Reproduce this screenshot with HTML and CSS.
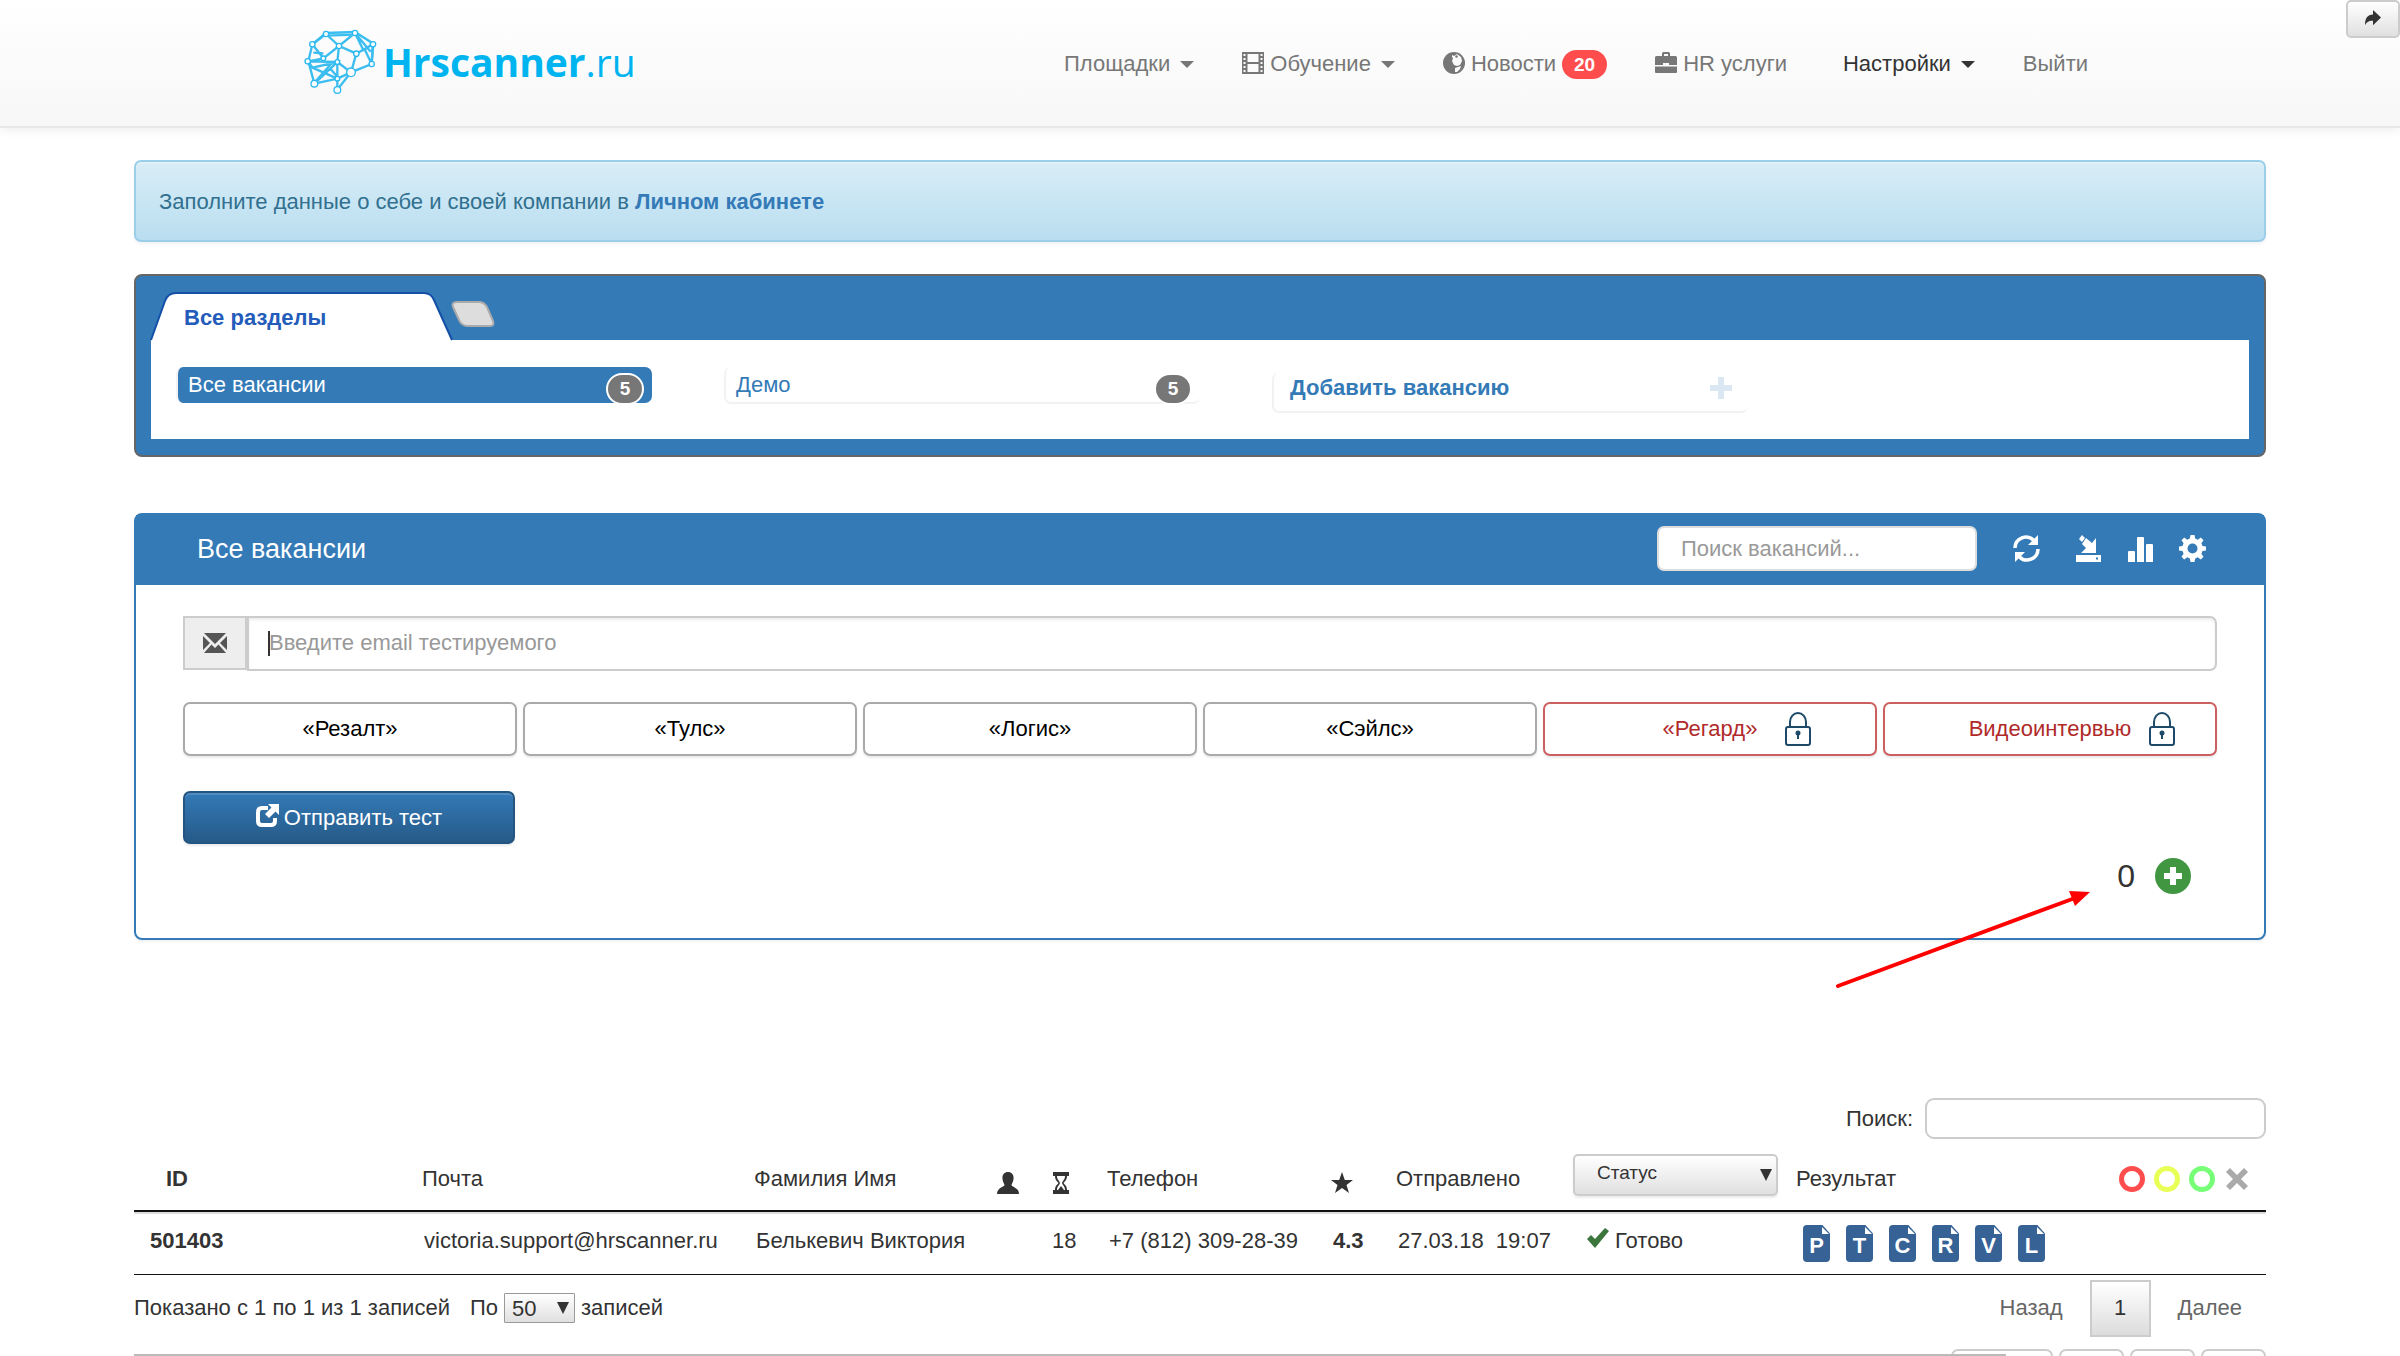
FILE: index.html
```html
<!DOCTYPE html>
<html lang="ru">
<head>
<meta charset="utf-8">
<title>Hrscanner.ru</title>
<link rel="stylesheet" href="styles.css">
</head>
<body>
<header class="navbar">
  <div class="navbar-inner">
    <a class="logo" href="#">
      <svg class="logo-mark" viewBox="69 87 222 198" aria-hidden="true">
        <g fill="none" stroke="#3cbdf0" stroke-width="7">
          <path d="M138 99L225 96L280 131L275 192L213 217L172 269L172 236L103 251L85 184L97 133Z"/>
          <path d="M138 107L225 104M138 102L177 138L225 99L272 155M225 99L250 150L278 133L229 161L177 138L172 186M130 175L97 133L138 102M177 138L130 175L85 184L172 186L213 217L229 161M278 133L275 192M172 186L172 236L213 217M85 184L97 203L172 186L103 251M97 203L172 236M130 160L100 158M172 186L213 217M105 246L155 190M150 205L172 230M254 148L275 192"/>
        </g>
        <g fill="#fff" stroke="#2bb8f0" stroke-width="4">
          <circle cx="138" cy="102" r="8"/><circle cx="225" cy="99" r="8"/><circle cx="97" cy="133" r="8"/><circle cx="177" cy="138" r="8"/><circle cx="279" cy="133" r="8"/><circle cx="229" cy="161" r="8"/><circle cx="83" cy="184" r="8"/><circle cx="130" cy="175" r="7"/><circle cx="172" cy="186" r="7"/><circle cx="275" cy="192" r="8"/><circle cx="213" cy="217" r="13"/><circle cx="103" cy="251" r="10"/><circle cx="172" cy="236" r="7"/><circle cx="172" cy="270" r="10"/>
        </g>
      </svg>
      <span class="logo-text"><b>Hrscanner</b>.ru</span>
    </a>
    <nav class="nav">
      <a href="#">Площадки <i class="caret"></i></a>
      <a href="#"><svg class="ic" viewBox="0 0 22 22"><path fill-rule="evenodd" d="M0 0h22v22H0zM1.500 2v2h2V2zM1.500 6v2h2V6zM1.500 10v2h2v-2zM1.500 14v2h2v-2zM1.500 18v2h2v-2zM18.500 2v2h2V2zM18.500 6v2h2V6zM18.500 10v2h2v-2zM18.500 14v2h2v-2zM18.500 18v2h2v-2zM5.500 2v8h11V2zM5.500 12v8h11v-8z"/></svg> Обучение <i class="caret"></i></a>
      <a href="#"><svg class="ic" viewBox="0 0 22 22"><circle cx="11" cy="11" r="11"/><path fill="#fbfbfb" d="M9 3l2 1 3-2 4 3 1 4-2 4-3 1-3-1-2-4 1-3-1-1zM12 16l6-2-1 3-3 3-2 0z"/><path d="M13 3l2 1-1 2-2-1z"/></svg> Новости <span class="tag">20</span></a>
      <a class="wide" href="#"><svg class="ic" viewBox="0 0 22 22"><path fill-rule="evenodd" d="M7 4V1.500Q7 0 8.500 0h5Q15 0 15 1.500V4h5.500Q22 4 22 5.500V13h-8v-2H8v2H0V5.500Q0 4 1.500 4zM9 2v2h4V2zM0 14.500h22V20q0 1-1 1H1q-1 0-1-1z"/></svg> HR услуги</a>
      <a class="active" href="#">Настройки <i class="caret"></i></a>
      <a href="#">Выйти</a>
    </nav>
  </div>
  <button class="share" aria-label="Поделиться"><svg viewBox="0 0 20 20"><path fill="#333" d="M10 0l10 9.500L10 19v-5.500C5 13 2 15 0 19 0 10 3 6 10 5.500z"/></svg></button>
</header>

<main class="page">
  <div class="alert">Заполните данные о себе и своей компании в <a href="#">Личном кабинете</a></div>

  <section class="sections">
    <div class="tabs">
      <button class="tab">
        <svg class="tab-shape" viewBox="0 0 302 48" aria-hidden="true"><path fill="#fff" d="M0 48L14 9Q17 1 25 1H273Q280 1 283 8L301 48Z"/><path fill="none" stroke="#1450a8" stroke-width="2" d="M0 48L14 9Q17 1 25 1H273Q280 1 283 8L301 48"/></svg>
        <span>Все разделы</span>
      </button>
      <button class="tab-new" aria-label="Новый раздел"><svg viewBox="0 0 44 26"><path fill="#ddd" stroke="#aaa" stroke-width="2" d="M6 1H28Q33 1 36 6L42 20Q44 25 39 25H17Q12 25 9 21L2 6Q0 1 6 1Z"/></svg></button>
    </div>
    <div class="vacancies">
      <a class="vacancy current" href="#">Все вакансии <span class="count">5</span></a>
      <a class="vacancy" href="#">Демо <span class="count">5</span></a>
      <a class="vacancy add" href="#">Добавить вакансию <svg viewBox="0 0 22 22"><path fill="#dbe7f2" d="M8 0h6v8h8v6h-8v8H8v-8H0V8h8z"/></svg></a>
    </div>
  </section>

  <section class="panel">
    <div class="panel-head">
      <h1>Все вакансии</h1>
      <input class="find" type="text" placeholder="Поиск вакансий..." aria-label="Поиск вакансий">
      <div class="tools">
        <button aria-label="Обновить" class="first"><svg viewBox="0 0 27 27"><path fill="none" stroke="#fff" stroke-width="3.500" d="M2 13A11 11 0 0 1 21 5.500M25 14A11 11 0 0 1 6 21.500"/><path fill="#fff" d="M25 0v10h-10zM2 27V17h10z"/></svg></button>
        <button aria-label="Загрузить"><svg viewBox="0 0 27 27"><path fill="#fff" fill-rule="evenodd" d="M1 20h25v7H1zM21 22.500v2h2v-2zM4 4l3-4 3 3-3 4zM11 3l6 5 4-5v15H6l5-5-4-4z"/></svg></button>
        <button aria-label="Статистика"><svg viewBox="0 0 27 27"><path fill="#fff" d="M1 17q0-1 1-1h5q1 0 1 1v10H1zM10 3q0-1 1-1h5q1 0 1 1v24h-7zM19 10q0-1 1-1h5q1 0 1 1v17h-7z"/></svg></button>
        <button aria-label="Настройки"><svg viewBox="0 0 27 27"><path fill="#fff" fill-rule="evenodd" d="M11.500 0h4l.7 3.600 2.600 1.100 3-2.100 2.700 2.700-2.100 3 1.100 2.600 3.500.6v4l-3.500.6-1.100 2.600 2.100 3-2.700 2.700-3-2.100-2.600 1.100-.7 3.600h-4l-.7-3.600-2.600-1.100-3 2.100-2.700-2.700 2.100-3-1.100-2.600-3.500-.6v-4l3.500-.6 1.100-2.600-2.100-3 2.700-2.700 3 2.100 2.600-1.100zM13.500 8.500a5 5 0 1 0 0 10 5 5 0 0 0 0-10z"/></svg></button>
      </div>
    </div>
    <div class="panel-body">
      <div class="email">
        <label class="addon" for="email" aria-label="Email"><svg viewBox="0 0 24 20"><path fill="#555" d="M1 0h22L12 11zM0 3l7 7-7 7zM24 3l-7 7 7 7zM8.500 11.500L12 15l3.500-3.500L23 20H1z"/></svg></label>
        <div class="email-box"><i class="cursor"></i><input id="email" type="email" placeholder="Введите email тестируемого"></div>
      </div>
      <div class="tests">
        <button>«Резалт»</button>
        <button>«Тулс»</button>
        <button>«Логис»</button>
        <button>«Сэйлс»</button>
        <button class="locked gap">«Регард» <svg viewBox="0 0 26 34"><path fill="none" stroke="#1c4a68" stroke-width="2" d="M5 15V10a8 9 0 0 1 16 0v5M3 15h20q2 0 2 2v14q0 2-2 2H3q-2 0-2-2V17q0-2 2-2z"/><circle cx="13" cy="21" r="2.500" fill="#1c4a68"/><path stroke="#1c4a68" stroke-width="2" d="M13 21v6"/></svg></button>
        <button class="locked video">Видеоинтервью <svg viewBox="0 0 26 34"><path fill="none" stroke="#1c4a68" stroke-width="2" d="M5 15V10a8 9 0 0 1 16 0v5M3 15h20q2 0 2 2v14q0 2-2 2H3q-2 0-2-2V17q0-2 2-2z"/><circle cx="13" cy="21" r="2.500" fill="#1c4a68"/><path stroke="#1c4a68" stroke-width="2" d="M13 21v6"/></svg></button>
      </div>
      <button class="send"><svg viewBox="0 0 23 23"><path fill="none" stroke="#fff" stroke-width="4" d="M12 4H6Q2 4 2 8v9q0 4 4 4h9q4 0 4-4v-3"/><path fill="#fff" d="M12 0h11v11l-3.500-3.500L13 14l-4-4 6.500-6.500z"/></svg> Отправить тест</button>
      <div class="balance"><span>0</span><button aria-label="Пополнить"><svg viewBox="0 0 36 36"><circle cx="18" cy="18" r="18" fill="#419641"/><path fill="#fff" d="M15 9h6v6h6v6h-6v6h-6v-6H9v-6h6z"/></svg></button></div>
    </div>
    <svg class="pointer" viewBox="0 0 256 100" aria-hidden="true"><path stroke="#f00" stroke-width="4" stroke-linecap="round" d="M3 97L240 9"/><path fill="#f00" d="M255 3L234 2L240 17Z"/></svg>
  </section>

  <div class="search"><label for="search">Поиск:</label><input id="search" type="text"></div>

  <table class="results">
    <colgroup><col class="c-id"><col class="c-mail"><col class="c-name"><col class="c-user"><col class="c-time"><col class="c-phone"><col class="c-star"><col class="c-date"><col class="c-status"><col></colgroup>
    <thead>
      <tr>
        <th class="id">ID</th>
        <th>Почта</th>
        <th>Фамилия Имя</th>
        <th class="sym" aria-label="Пользователь"><svg viewBox="0 0 22 22"><path fill="#333" d="M11 0c4 0 6 3 5.500 7-.3 3-1.500 4-2 6 0 2 7.500 2.500 7.500 9H0c0-6.500 7.500-7 7.500-9-.5-2-1.700-3-2-6C5 3 7 0 11 0z"/></svg></th>
        <th class="sym" aria-label="Время"><svg viewBox="0 0 22 22"><path fill="#333" fill-rule="evenodd" d="M3 0h16v4h-2c0 4-2 5-3.500 7 1.500 2 3.500 3 3.500 7h2v4H3v-4h2c0-4 2-5 3.500-7C7 9 5 8 5 4H3zM7 4c0 4 2.500 4.500 3 7-.5 2.500-3 3-3 7h1l3-4 3 4h1c0-4-2.500-4.500-3-7 .5-2.500 3-3 3-7z"/></svg></th>
        <th>Телефон</th>
        <th class="sym" aria-label="Оценка"><svg viewBox="0 0 22 22"><path fill="#333" d="M11 0l2.800 8H22l-6.500 5 2.500 8-7-5-7 5 2.500-8L0 8h8.200z"/></svg></th>
        <th>Отправлено</th>
        <th class="status"><span class="pick"><select aria-label="Статус"><option>Статус</option></select></span></th>
        <th class="result"><div class="result-head">Результат<span class="marks"><i class="ring red"></i><i class="ring yellow"></i><i class="ring green"></i><svg viewBox="0 0 24 24"><path fill="#aaa" d="M5 1l7 7 7-7 4 4-7 7 7 7-4 4-7-7-7 7-4-4 7-7-7-7z"/></svg></span></div></th>
      </tr>
    </thead>
    <tbody>
      <tr>
        <td><b>501403</b></td>
        <td>victoria.support@hrscanner.ru</td>
        <td>Белькевич Виктория</td>
        <td></td>
        <td>18</td>
        <td>+7 (812) 309-28-39</td>
        <td><b>4.3</b></td>
        <td>27.03.18&nbsp; 19:07</td>
        <td><svg class="ok" viewBox="0 0 22 20"><path fill="#3c763d" d="M0 11l4-4 4 4L18 0l4 3L8 20z"/></svg> Готово</td>
        <td>
          <div class="files">
            <a href="#">P</a><a href="#">T</a><a href="#">C</a><a href="#">R</a><a href="#">V</a><a href="#">L</a>
          </div>
        </td>
      </tr>
    </tbody>
  </table>

  <div class="table-foot">
    <span>Показано с 1 по 1 из 1 записей</span>
    <label class="length">По <span class="pick small"><select><option>50</option></select></span> записей</label>
    <div class="pages"><button>Назад</button><button class="on">1</button><button>Далее</button></div>
  </div>
  <div class="export">
    <button class="big" aria-label="Копировать"></button><button aria-label="CSV"></button><button aria-label="Excel"></button><button aria-label="Печать"></button>
    <i class="scrollbar"></i>
  </div>
</main>
</body>
</html>
```
FILE: styles.css
```css
* { box-sizing: border-box; }
body {
  margin: 0;
  height: 100vh;
  overflow: hidden;
  background: #fff;
  color: #333;
  font: 22px/30px "Liberation Sans", Arial, sans-serif;
}
a { color: #337ab7; text-decoration: none; }
button, input, select { font: inherit; color: inherit; margin: 0; }
button { padding: 0; border: 0; background: none; }
svg { display: inline-block; flex: none; overflow: visible; }
input::placeholder { color: #999; opacity: 1; }

/* Top bar */
.navbar {
  position: relative;
  height: 128px;
  border-bottom: 2px solid #e7e7e7;
  background: linear-gradient(#fff, #f7f7f7);
  box-shadow: 0 2px 10px rgba(0, 0, 0, .07);
}
.navbar-inner {
  width: 76%;
  height: 100%;
  margin: 0 auto;
  padding-left: 15px;
  display: flex;
  justify-content: space-between;
}
.logo { display: flex; align-items: flex-start; gap: 6px; padding-top: 29px; color: #00b4f0; }
.logo-mark { width: 74px; height: 66px; }
.logo-text { font: 39px/66px "Open Sans", sans-serif; }
.nav { display: flex; height: 128px; align-items: center; }
.nav a { display: flex; align-items: center; gap: 6px; padding: 0 24px; color: #777; }
.nav a.active { color: #333; }
.nav a.wide { padding-right: 32px; }
.ic { width: 22px; height: 22px; margin-bottom: 3px; fill: #777; }
.caret { margin-left: 4px; border: 7px solid transparent; border-top: 7px solid; border-bottom: 0; }
.tag {
  padding: 0 12px;
  border-radius: 15px;
  background: #ff4d4d;
  color: #fff;
  font: bold 19px/29px "Liberation Sans", Arial, sans-serif;
}
.share {
  position: absolute;
  top: 0;
  right: 0;
  width: 54px;
  height: 38px;
  border: 2px solid #ccc;
  border-radius: 5px;
  background: linear-gradient(#fff, #e0e0e0);
}
.share svg { width: 20px; height: 16px; }

.page { padding: 32px 134px 0; }

.alert {
  height: 82px;
  padding: 25px 23px 0;
  border: 2px solid #9acfea;
  border-radius: 7px;
  background: linear-gradient(#d9edf7, #b9def0);
  box-shadow: inset 0 2px 0 rgba(255, 255, 255, .25), 0 2px 3px rgba(0, 0, 0, .05);
  color: #31708f;
}
.alert a { font-weight: bold; }

/* Section tabs */
.sections {
  margin-top: 32px;
  padding: 16px 15px;
  border: 2px solid #666;
  border-radius: 8px;
  background: #337ab7;
}
.tabs { display: flex; align-items: flex-start; }
.tab {
  position: relative;
  width: 300px;
  height: 48px;
  padding: 3px 0 0 33px;
  text-align: left;
  font-weight: bold;
  color: #235cba;
}
.tab-shape { position: absolute; left: 0; top: 0; width: 302px; height: 48px; }
.tab span { position: relative; }
.tab-new { height: 26px; margin-top: 9px; }
.tab-new svg { display: block; width: 44px; height: 26px; }
.vacancies {
  display: flex;
  gap: 72px;
  height: 99px;
  padding: 27px 25px;
  background: #fff;
}
.vacancy {
  display: flex;
  justify-content: space-between;
  width: 476px;
  height: 37px;
  padding: 3px 8px 0 10px;
  border: 2px solid #f2f2f2;
  border-width: 0 0 2px 2px;
  border-radius: 7px;
}
.vacancy.current { border-bottom: 0; height: 36px; background: #337ab7; color: #fff; }
.vacancy.add { height: 41px; margin-top: 5px; padding: 1px 16px 0; font-weight: bold; }
.add svg { width: 22px; height: 22px; margin-top: 4px; }
.count {
  width: 38px;
  height: 32px;
  margin-top: 3px;
  border: 2px solid #fff;
  border-radius: 16px;
  background: #777;
  color: #fff;
  font: bold 19px/28px "Liberation Sans", Arial, sans-serif;
  text-align: center;
}

/* Vacancy panel */
.panel {
  position: relative;
  margin-top: 56px;
  border: 2px solid #337ab7;
  border-radius: 8px;
  box-shadow: 0 2px 3px rgba(0, 0, 0, .05);
}
.panel-head {
  display: flex;
  align-items: center;
  height: 70px;
  padding: 0 58px 3px 61px;
  background: #337ab7;
  color: #fff;
}
.panel-head h1 { flex: 1; margin: 0; font-size: 27px; font-weight: normal; }
.find {
  width: 320px;
  height: 45px;
  padding: 0 22px;
  border: 2px solid #ddd;
  border-radius: 7px;
  background: #fff;
  color: #555;
}
.tools { display: flex; gap: 25px; margin-left: 36px; }
.tools .first { margin-right: 10px; }
.tools button, .tools svg { display: block; width: 27px; height: 27px; }
.panel-body { padding: 31px 47px 44px; }
.email { display: flex; align-items: flex-start; }
.addon {
  display: flex;
  align-items: center;
  justify-content: center;
  width: 64px;
  height: 54px;
  border: 2px solid #ccc;
  background: #eee;
}
.addon svg { width: 24px; height: 20px; }
.email-box { position: relative; flex: 1; }
.email-box input {
  display: block;
  width: 100%;
  height: 55px;
  padding: 0 20px 2px;
  border: 2px solid #ccc;
  border-radius: 0 7px 7px 0;
  box-shadow: inset 0 2px 3px rgba(0, 0, 0, .08);
}
.cursor { position: absolute; left: 21px; top: 15px; width: 2px; height: 25px; background: #333; }
.tests { display: grid; grid-template-columns: repeat(6, 1fr); gap: 6px; margin-top: 31px; }
.tests button {
  display: flex;
  align-items: center;
  justify-content: center;
  height: 54px;
  border: 2px solid #aaa;
  border-radius: 7px;
  color: #000;
  box-shadow: 0 2px 2px rgba(0, 0, 0, .08);
}
.tests .locked { border-color: #cc6060; color: #b02a2a; }
.tests svg { width: 26px; height: 34px; }
.tests .gap { gap: 28px; padding-left: 54px; }
.tests .video { gap: 18px; padding-left: 44px; }
.send {
  display: flex;
  align-items: center;
  justify-content: center;
  gap: 5px;
  width: 332px;
  height: 53px;
  margin-top: 35px;
  border: 2px solid #245580;
  border-radius: 7px;
  background: linear-gradient(#337ab7, #265a88);
  box-shadow: inset 0 2px 0 rgba(255, 255, 255, .15), 0 2px 2px rgba(0, 0, 0, .08);
  color: #fff;
}
.send svg { width: 23px; height: 23px; margin-bottom: 5px; }
.balance {
  display: flex;
  align-items: center;
  justify-content: flex-end;
  gap: 20px;
  margin-top: 14px;
  padding-right: 26px;
  font-size: 32px;
  line-height: 36px;
}
.balance svg { display: block; width: 36px; height: 36px; }
.pointer { position: absolute; right: 173px; bottom: -51px; width: 256px; height: 100px; }

/* Results */
.search { display: flex; justify-content: flex-end; align-items: center; gap: 12px; margin-top: 158px; }
.search input { width: 341px; height: 41px; border: 2px solid #ccc; border-radius: 9px; }
.results { width: 100%; margin-top: 9px; border-collapse: separate; border-spacing: 0; table-layout: fixed; }
.c-id { width: 274px; }
.c-mail { width: 332px; }
.c-name { width: 243px; }
.c-user { width: 53px; }
.c-time { width: 57px; }
.c-phone { width: 224px; }
.c-star { width: 65px; }
.c-date { width: 189px; }
.c-status { width: 214px; }
.results th, .results td { white-space: nowrap; text-align: left; }
.results th {
  height: 64px;
  padding: 0 0 0 14px;
  border-bottom: 2px solid #111;
  font-weight: normal;
}
.results .id { padding-left: 32px; font-weight: bold; }
.results .sym { padding-top: 8px; }
.results th.status { padding: 0 0 8px 2px; }
.results th.result { padding-left: 11px; }
.sym svg { display: block; width: 22px; height: 22px; }
.results td {
  height: 63px;
  padding: 0 0 4px 16px;
  border-bottom: 1px solid #111;
  box-shadow: inset 0 2px 0 #ddd;
}
.pick { position: relative; display: inline-block; vertical-align: middle; }
.pick::after {
  content: "";
  position: absolute;
  right: 6px;
  top: 15px;
  width: 12px;
  height: 12px;
  background: #333;
  clip-path: polygon(0 0, 100% 0, 50% 100%);
  pointer-events: none;
}
.pick select {
  display: block;
  appearance: none;
  width: 205px;
  height: 42px;
  padding: 0 22px 4px;
  border: 2px solid #ccc;
  border-radius: 5px;
  background: linear-gradient(#fff, #e0e0e0);
  box-shadow: 0 2px 2px rgba(0, 0, 0, .08);
  font-size: 19px;
}
.pick.small::after { top: 9px; }
.pick.small select {
  width: 71px;
  height: 30px;
  padding: 0 7px;
  border: 1px solid #999;
  border-radius: 1px;
  box-shadow: none;
  font-size: 22px;
}
.result-head { display: flex; justify-content: space-between; align-items: center; padding-right: 16px; }
.marks { display: flex; align-items: center; gap: 9px; }
.marks svg { width: 26px; height: 24px; }
.ring { width: 26px; height: 26px; border: 5px solid; border-radius: 50%; }
.red { color: #ff4d4d; }
.yellow { color: #e8ff55; }
.green { color: #77ff77; }
.ok { width: 22px; height: 20px; }
.files { display: flex; gap: 16px; padding: 5px 0 0 2px; }
.files a {
  position: relative;
  width: 27px;
  height: 37px;
  border-radius: 4px;
  background: #376296;
  clip-path: polygon(0 0, 72% 0, 100% 23%, 100% 100%, 0 100%);
  color: #fff;
  font: bold 22px/42px "Liberation Sans", Arial, sans-serif;
  text-align: center;
}
.files a::before {
  content: "";
  position: absolute;
  right: 1px;
  top: 2px;
  width: 7px;
  height: 7px;
  background: #fff;
  clip-path: polygon(0 0, 100% 100%, 0 100%);
}
.table-foot { display: flex; align-items: center; gap: 20px; height: 66px; }
.length { display: flex; align-items: center; gap: 6px; }
.pages { display: flex; gap: 27px; align-items: center; margin-left: auto; padding-right: 24px; color: #666; }
.pages .on {
  width: 61px;
  height: 57px;
  border: 2px solid #ccc;
  background: linear-gradient(#fff, #dcdcdc);
  color: #333;
}
.export { position: relative; display: flex; justify-content: flex-end; gap: 6px; margin-top: 8px; }
.export button { width: 65px; height: 45px; border: 2px solid #ccc; border-radius: 7px; }
.export .big { width: 102px; }
.scrollbar { position: absolute; left: 0; right: 260px; top: 5px; height: 2px; background: #bbb; }
```
